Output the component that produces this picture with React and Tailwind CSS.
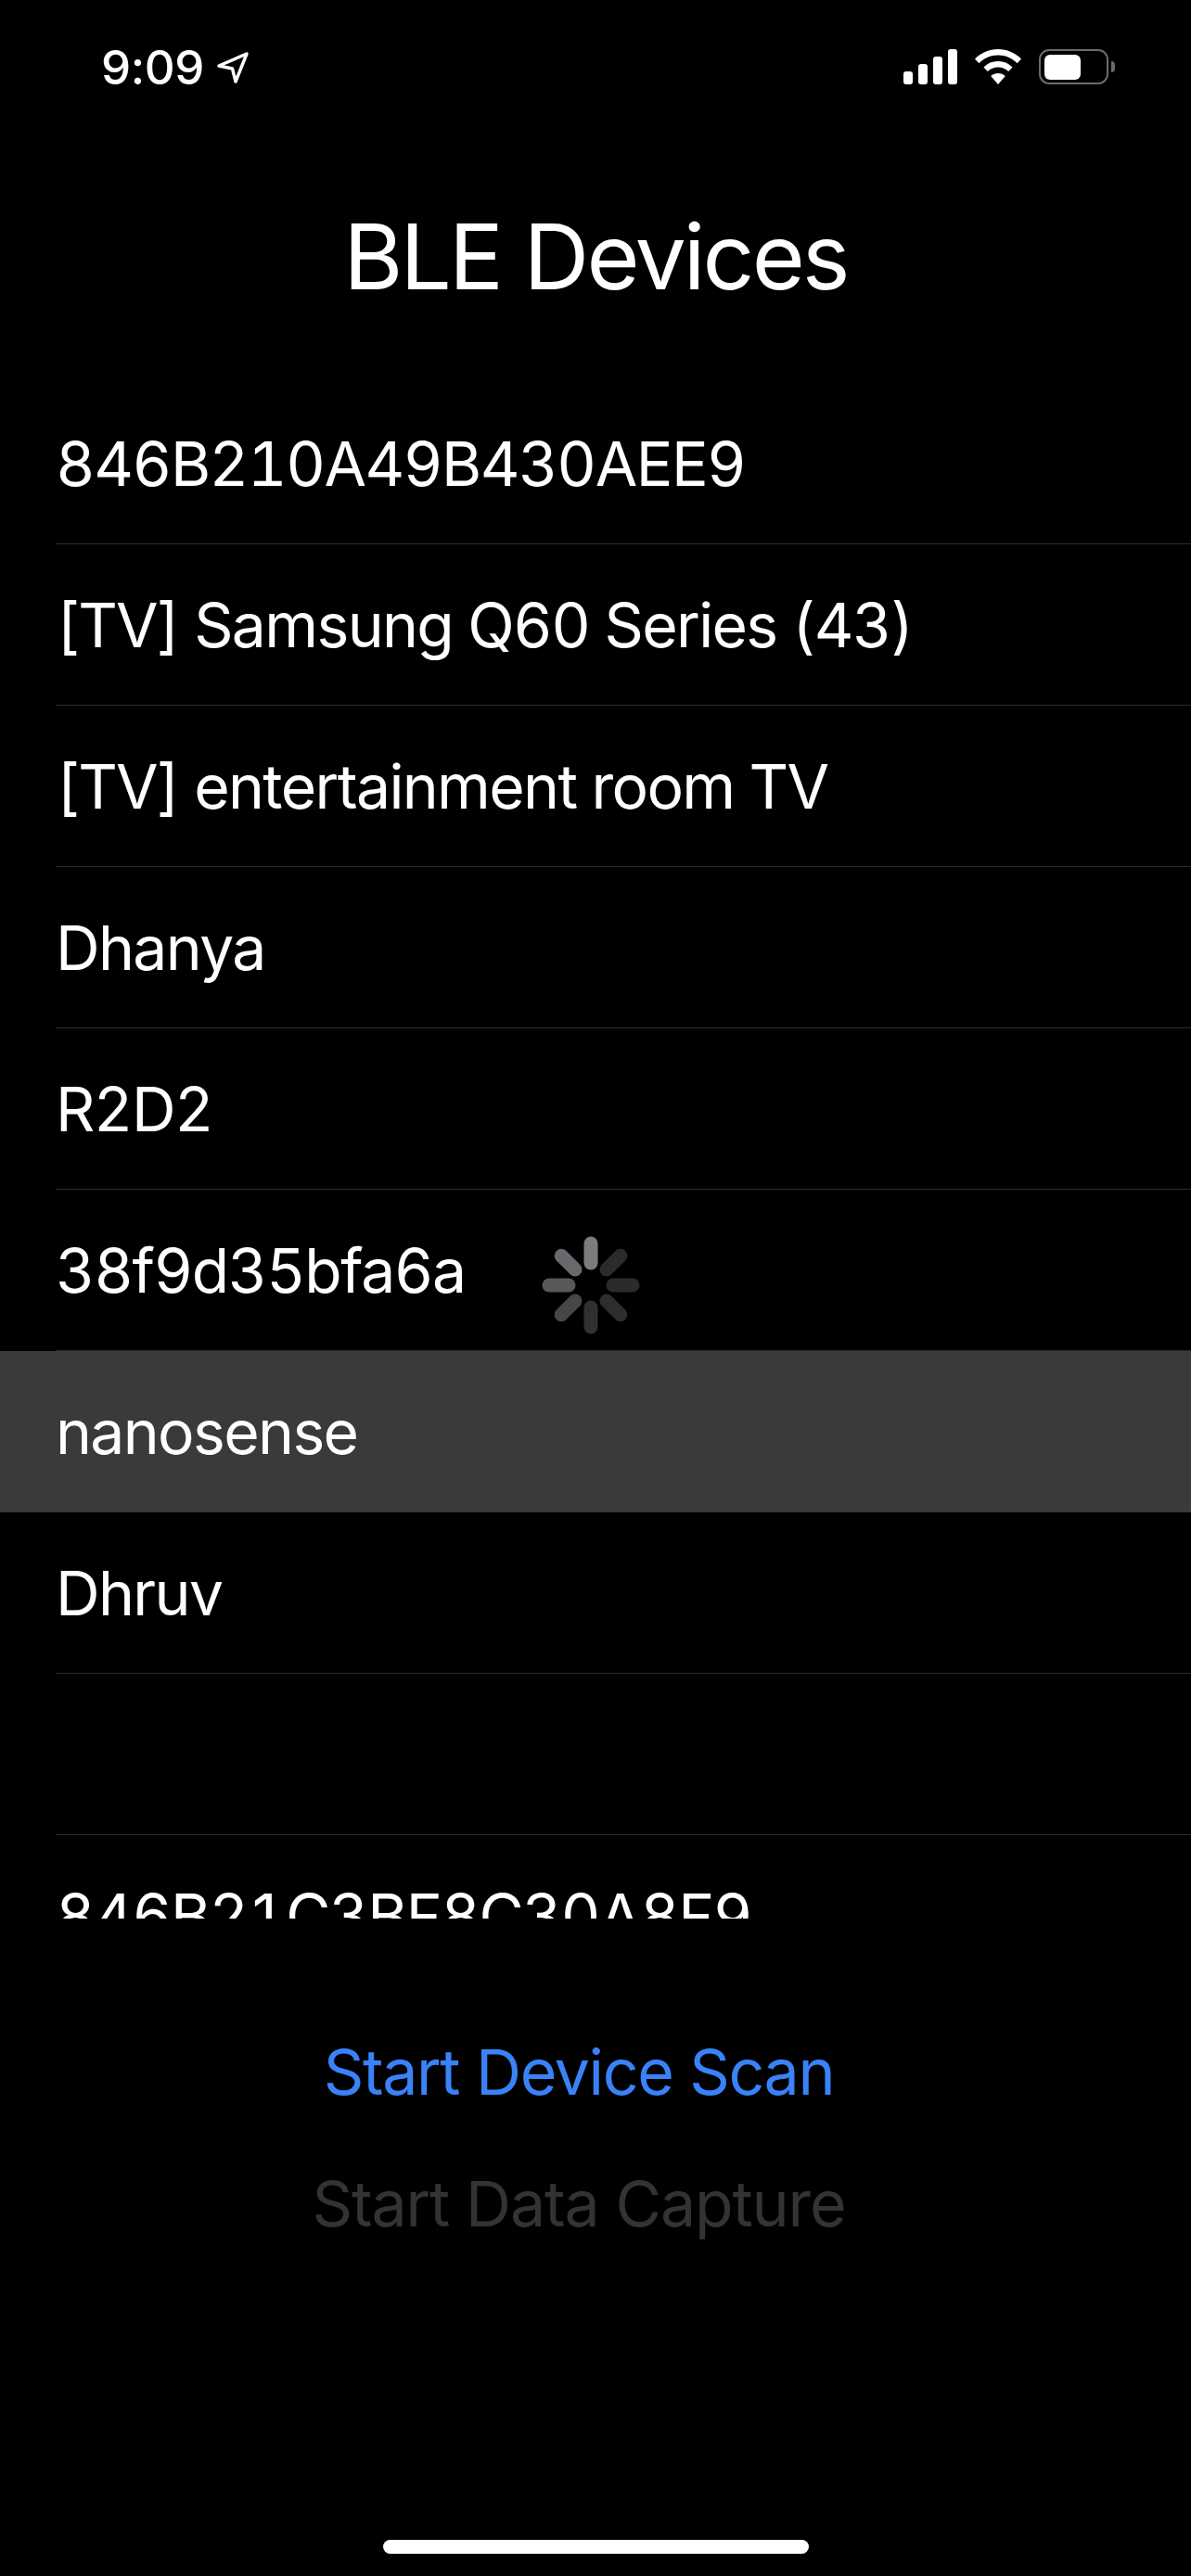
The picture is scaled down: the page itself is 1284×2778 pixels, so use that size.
const devices = [
  "846B210A49B430AEE9",
  "[TV] Samsung Q60 Series (43)",
  "[TV] entertainment room TV",
  "Dhanya",
  "R2D2",
  "38f9d35bfa6a",
  "nanosense",
  "Dhruv",
  "",
  "846B21C3BF8C30A8F9",
];

const spinnerBars = [
  { angle: 0, color: "#7c7c80" },
  { angle: 45, color: "#2b2b2d" },
  { angle: 90, color: "#2b2b2d" },
  { angle: 135, color: "#2d2d2f" },
  { angle: 180, color: "#303032" },
  { angle: 225, color: "#47474a" },
  { angle: 270, color: "#58585a" },
  { angle: 315, color: "#69696d" },
];

function StatusBar() {
  return (
    <div className="flex h-[140px] items-start justify-between pl-[109px] pr-[82px]">
      <div className="flex items-center gap-[13px] pt-[45px]">
        <span className="text-[51px] leading-[56px] font-medium tracking-[-0.4px] text-white">9:09</span>
        <svg width="36" height="36" viewBox="0 0 36 36" fill="none">
          <path d="M3 16 L33 3 L21 33 L17.5 19 Z" stroke="white" strokeWidth="3.4" strokeLinejoin="round" />
        </svg>
      </div>
      <div className="flex items-center gap-[19px] pt-[53px]">
        <svg width="58" height="38" viewBox="0 0 58 38" fill="white">
          <rect x="0" y="24" width="10" height="14" rx="3" />
          <rect x="16" y="16" width="10" height="22" rx="3" />
          <rect x="32" y="8" width="10" height="30" rx="3" />
          <rect x="48" y="0" width="10" height="38" rx="3" />
        </svg>
        <svg width="50" height="38" viewBox="0 0 50 38" fill="white">
          <path d="M25 0 C34.5 0 43 3.7 50 10.5 L45.6 15.3 C40 9.8 33 6.6 25 6.6 C17 6.6 10 9.8 4.4 15.3 L0 10.5 C7 3.7 15.5 0 25 0 Z" />
          <path d="M25 13 C31 13 36.2 15.2 40.6 19.4 L36.2 24 C33 21.2 29.3 19.6 25 19.6 C20.7 19.6 17 21.2 13.8 24 L9.4 19.4 C13.8 15.2 19 13 25 13 Z" />
          <path d="M25 26 C28 26 30.6 27 32.8 29 L25 38 L17.2 29 C19.4 27 22 26 25 26 Z" />
        </svg>
        <div className="flex items-center gap-[3px]">
          <div className="flex h-[38px] w-[75px] items-center rounded-[11px] border-[2.5px] border-[#6b6b6b] px-[3.5px] py-[3.5px]">
            <div className="h-full w-[39px] rounded-[6px] bg-white" />
          </div>
          <div className="h-[12px] w-[4px] rounded-r-full bg-[#6b6b6b]" />
        </div>
      </div>
    </div>
  );
}

function Spinner() {
  return (
    <svg width="110" height="110" viewBox="-55 -55 110 110" className="absolute left-[582px] top-[48px]">
      {spinnerBars.map((b) => (
        <rect key={b.angle} x="-7.5" y="-52.5" width="15" height="36" rx="7.5" fill={b.color} transform={`rotate(${b.angle})`} />
      ))}
    </svg>
  );
}

function DeviceRow({ name, selected, loading }) {
  const isHex = /^[0-9a-fA-F]+$/.test(name) && name.length > 8;
  return (
    <div className={`relative h-[174px] shrink-0 pl-[60px] ${selected ? "bg-[#3a3a3c]" : ""}`}>
      <div className={`flex h-full items-center border-b pt-[2px] text-[66px] text-white tabular-nums ${selected ? "border-transparent" : "border-[#2c2c2e]"} ${isHex ? "tracking-[-1.5px]" : "tracking-[-0.025em]"}`}>
        {name}
      </div>
      {loading && <Spinner />}
    </div>
  );
}

export default function App() {
  return (
    <div className="flex h-[2778px] w-[1284px] flex-col overflow-hidden bg-black font-['Inter',sans-serif]">
      <StatusBar />
      <h1 className="flex h-[273px] items-center justify-center text-[98px] font-normal tracking-[-0.03em] text-white">BLE Devices</h1>
      <div className="flex h-[1656px] flex-col overflow-hidden">
        {devices.map((d, i) => (
          <DeviceRow key={i} name={d} selected={d === "nanosense"} loading={d === "38f9d35bfa6a"} />
        ))}
      </div>
      <div className="flex flex-col items-center pr-[36px] pt-[94px] text-[68px] tracking-[-0.02em]">
        <button className="h-[142px] text-[#3a82f7]">Start Device Scan</button>
        <button className="h-[142px] tracking-[-0.017em] text-[#333335]">Start Data Capture</button>
      </div>
      <div className="mt-auto flex justify-center pb-[24px]">
        <div className="h-[15px] w-[459px] rounded-full bg-white" />
      </div>
    </div>
  );
}
